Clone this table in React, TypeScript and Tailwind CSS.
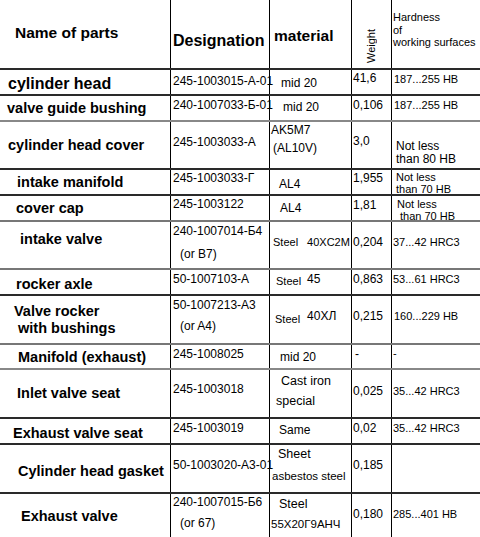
import React from "react";

const C1 = "w-[171px] shrink-0 border-r border-black relative";
const C2 = "w-[99px] shrink-0 border-r border-black relative";
const C3 = "w-[82px] shrink-0 border-r border-black relative";
const C4 = "w-[40px] shrink-0 border-r border-black relative";
const C5 = "w-[88px] shrink-0 relative";

const N = "font-bold text-[14.5px] leading-[17px] whitespace-nowrap";
const D = "text-[12px] leading-[14px] whitespace-nowrap";
const M = "text-[12px] leading-[14px] whitespace-nowrap";
const S = "text-[11px] leading-[14px] whitespace-nowrap";
const Wt = "text-[12px] leading-[14px] whitespace-nowrap pl-[1px]";
const H = "text-[11px] leading-[13px] whitespace-nowrap";

export default function App() {
  return (
    <div className="w-[480px] h-[537px] bg-white text-black overflow-hidden font-['Liberation_Sans',Arial,sans-serif]">
      {/* header */}
      <div className="flex h-[70px] border-b-2 border-[#2a2a2a]">
        <div className={C1}>
          <div className="font-bold text-[15.5px] leading-[18px] pl-[15px] pt-[24px] whitespace-nowrap">Name of parts</div>
        </div>
        <div className={C2}>
          <div className="font-bold text-[16px] leading-[18px] pl-[2px] pt-[32px] whitespace-nowrap">Designation</div>
        </div>
        <div className={C3}>
          <div className="font-bold text-[15.5px] leading-[18px] pl-[4px] pt-[27px] whitespace-nowrap">material</div>
        </div>
        <div className={`${C4} flex flex-col justify-end items-center pb-[5px] pr-[1px]`}>
          <div className="text-[11px] leading-[11px] [writing-mode:vertical-rl] rotate-180 whitespace-nowrap">Weight</div>
        </div>
        <div className={`${C5} overflow-hidden`}>
          <div className="text-[11px] leading-[12.5px] pl-[1px] pt-[11px] whitespace-nowrap">
            <div>Hardness</div>
            <div>of</div>
            <div>working surfaces</div>
          </div>
        </div>
      </div>

      {/* cylinder head */}
      <div className="flex h-[26px] border-b-2 border-[#2a2a2a]">
        <div className={C1}>
          <div className="font-bold text-[16px] leading-[18px] pl-[8px] pt-[5px] whitespace-nowrap">cylinder head</div>
        </div>
        <div className={C2}><div className={`${D} pl-[2px] pt-[4px]`}>245-1003015-A-01</div></div>
        <div className={C3}><div className={`${M} pl-[11px] pt-[6px]`}>mid 20</div></div>
        <div className={C4}><div className={`${Wt} pt-[1px]`}>41,6</div></div>
        <div className={C5}><div className={`${H} pl-[2px] pt-[3px]`}>187...255 HB</div></div>
      </div>

      {/* valve guide bushing */}
      <div className="flex h-[26px] border-b-2 border-[#888]">
        <div className={C1}><div className={`${N} pl-[7px] pt-[4px]`}>valve guide bushing</div></div>
        <div className={C2}><div className={`${D} pl-[2px] pt-[2px]`}>240-1007033-Б-01</div></div>
        <div className={C3}><div className={`${M} pl-[13px] pt-[4px]`}>mid 20</div></div>
        <div className={C4}><div className={`${Wt} pt-[2px]`}>0,106</div></div>
        <div className={C5}><div className={`${H} pl-[2px] pt-[2.5px]`}>187...255 HB</div></div>
      </div>

      {/* cylinder head cover */}
      <div className="flex h-[48px] border-b-2 border-[#2a2a2a]">
        <div className={C1}><div className={`${N} pl-[8px] pt-[14.5px]`}>cylinder head cover</div></div>
        <div className={C2}><div className={`${D} pl-[2px] pt-[13px]`}>245-1003033-A</div></div>
        <div className={C3}>
          <div className={`${M} pl-[1px] pt-[1px]`}>AK5M7</div>
          <div className={`${M} pl-[3px] mt-[4px]`}>(AL10V)</div>
        </div>
        <div className={C4}><div className={`${Wt} pt-[12px]`}>3,0</div></div>
        <div className={C5}>
          <div className="text-[12px] leading-[13px] whitespace-nowrap pl-[4px] pt-[17.5px]">
            <div>Not less</div>
            <div>than 80 HB</div>
          </div>
        </div>
      </div>

      {/* intake manifold */}
      <div className="flex h-[26px] border-b-2 border-[#2a2a2a]">
        <div className={C1}><div className={`${N} pl-[17px] pt-[3.5px]`}>intake manifold</div></div>
        <div className={C2}><div className={`${D} pl-[2px] pt-[1px]`}>245-1003033-Г</div></div>
        <div className={C3}><div className={`${M} pl-[9px] pt-[7px]`}>AL4</div></div>
        <div className={C4}><div className={`${Wt} pt-[1px]`}>1,955</div></div>
        <div className={C5}>
          <div className="text-[11px] leading-[12px] whitespace-nowrap pl-[4px] pt-[1px]">
            <div>Not less</div>
            <div>than 70 HB</div>
          </div>
        </div>
      </div>

      {/* cover cap */}
      <div className="flex h-[26px] border-b-2 border-[#777]">
        <div className={C1}><div className={`${N} pl-[16px] pt-[3.5px]`}>cover cap</div></div>
        <div className={C2}><div className={`${D} pl-[2px] pt-[1px]`}>245-1003122</div></div>
        <div className={C3}><div className={`${M} pl-[10px] pt-[5px]`}>AL4</div></div>
        <div className={C4}><div className={`${Wt} pt-[2px]`}>1,81</div></div>
        <div className={C5}>
          <div className="text-[11px] leading-[12px] whitespace-nowrap pt-[2px]">
            <div className="pl-[5px]">Not less</div>
            <div className="pl-[8px]">than 70 HB</div>
          </div>
        </div>
      </div>

      {/* intake valve */}
      <div className="flex h-[48px] border-b-2 border-[#777]">
        <div className={C1}><div className={`${N} pl-[20px] pt-[8.5px]`}>intake valve</div></div>
        <div className={C2}>
          <div className={`${D} pl-[2px] pt-[2px]`}>240-1007014-Б4</div>
          <div className={`${D} pl-[9px] mt-[9px]`}>(or B7)</div>
        </div>
        <div className={C3}>
          <div className="flex items-baseline pl-[3px] pt-[13px] whitespace-nowrap">
            <span className={S}>Steel</span>
            <span className={`${S} ml-[9px]`}>40XC2M</span>
          </div>
        </div>
        <div className={C4}><div className={`${Wt} pt-[13px]`}>0,204</div></div>
        <div className={C5}><div className={`${H} pl-[1px] pt-[13.5px]`}>37...42 HRC3</div></div>
      </div>

      {/* rocker axle */}
      <div className="flex h-[26px] border-b-2 border-[#2a2a2a]">
        <div className={C1}><div className={`${N} pl-[16px] pt-[5.5px]`}>rocker axle</div></div>
        <div className={C2}><div className={`${D} pl-[2px] pt-[2px]`}>50-1007103-A</div></div>
        <div className={C3}>
          <div className="flex items-start pl-[6px] pt-[2px] whitespace-nowrap">
            <span className={`${S} mt-[2px]`}>Steel</span>
            <span className={`${M} ml-[6px]`}>45</span>
          </div>
        </div>
        <div className={C4}><div className={`${Wt} pt-[2px]`}>0,863</div></div>
        <div className={C5}><div className={`${H} pl-[1px] pt-[2.5px]`}>53...61 HRC3</div></div>
      </div>

      {/* valve rocker */}
      <div className="flex h-[49px] border-b-2 border-[#777]">
        <div className={C1}>
          <div className={`${N} pl-[14px] pt-[6.5px]`}>Valve rocker</div>
          <div className={`${N} pl-[18px]`}>with bushings</div>
        </div>
        <div className={C2}>
          <div className={`${D} pl-[2px] pt-[2px]`}>50-1007213-A3</div>
          <div className={`${D} pl-[9px] mt-[7px]`}>(or A4)</div>
        </div>
        <div className={C3}>
          <div className="flex items-start pl-[5px] pt-[13px] whitespace-nowrap">
            <span className={`${S} mt-[3px]`}>Steel</span>
            <span className={`${M} ml-[7px]`}>40ХЛ</span>
          </div>
        </div>
        <div className={C4}><div className={`${Wt} pt-[13px]`}>0,215</div></div>
        <div className={C5}><div className={`${H} pl-[2px] pt-[13.5px]`}>160...229 HB</div></div>
      </div>

      {/* manifold exhaust */}
      <div className="flex h-[25px] border-b-2 border-[#888]">
        <div className={C1}><div className={`${N} pl-[18px] pt-[3.5px]`}>Manifold (exhaust)</div></div>
        <div className={C2}><div className={`${D} pl-[2px] pt-[2px]`}>245-1008025</div></div>
        <div className={C3}><div className={`${M} pl-[10px] pt-[5px]`}>mid 20</div></div>
        <div className={C4}><div className={`${Wt} pl-[3px] pt-[2px]`}>-</div></div>
        <div className={C5}><div className={`${H} pl-[1px] pt-[2px]`}>-</div></div>
      </div>

      {/* inlet valve seat */}
      <div className="flex h-[49px] border-b-2 border-[#2a2a2a]">
        <div className={C1}><div className={`${N} pl-[17px] pt-[14.5px]`}>Inlet valve seat</div></div>
        <div className={C2}><div className={`${D} pl-[2px] pt-[12px]`}>245-1003018</div></div>
        <div className={C3}>
          <div className="text-[12.5px] leading-[14px] whitespace-nowrap pl-[11px] pt-[4px]">Cast iron</div>
          <div className="text-[12.5px] leading-[14px] whitespace-nowrap pl-[6px] mt-[6px]">special</div>
        </div>
        <div className={C4}><div className={`${Wt} pt-[14px]`}>0,025</div></div>
        <div className={C5}><div className={`${H} pl-[1px] pt-[14.5px]`}>35...42 HRC3</div></div>
      </div>

      {/* exhaust valve seat */}
      <div className="flex h-[26px] border-b-2 border-[#2a2a2a]">
        <div className={C1}><div className={`${N} pl-[13px] pt-[5.5px]`}>Exhaust valve seat</div></div>
        <div className={C2}><div className={`${D} pl-[2px] pt-[2px]`}>245-1003019</div></div>
        <div className={C3}><div className={`${M} pl-[9px] pt-[4px]`}>Same</div></div>
        <div className={C4}><div className={`${Wt} pt-[2px]`}>0,02</div></div>
        <div className={C5}><div className={`${H} pl-[1px] pt-[2.5px]`}>35...42 HRC3</div></div>
      </div>

      {/* cylinder head gasket */}
      <div className="flex h-[49px] border-b-2 border-[#2a2a2a]">
        <div className={C1}><div className={`${N} pl-[18px] pt-[17.5px]`}>Cylinder head gasket</div></div>
        <div className={C2}><div className={`${D} pl-[2px] pt-[13px]`}>50-1003020-A3-01</div></div>
        <div className={C3}>
          <div className="text-[12.5px] leading-[14px] whitespace-nowrap pl-[8px] pt-[2px]">Sheet</div>
          <div className="text-[11.5px] leading-[14px] whitespace-nowrap pl-[2px] mt-[8px]">asbestos steel</div>
        </div>
        <div className={C4}><div className={`${Wt} pt-[13px]`}>0,185</div></div>
        <div className={C5}></div>
      </div>

      {/* exhaust valve */}
      <div className="flex h-[43px]">
        <div className={C1}><div className={`${N} pl-[21px] pt-[13.5px]`}>Exhaust valve</div></div>
        <div className={C2}>
          <div className={`${D} pl-[2px] pt-[1px]`}>240-1007015-Б6</div>
          <div className={`${D} pl-[9px] mt-[7px]`}>(or 67)</div>
        </div>
        <div className={C3}>
          <div className="text-[12.5px] leading-[14px] whitespace-nowrap pl-[9px] pt-[3px]">Steel</div>
          <div className="text-[11.5px] leading-[14px] whitespace-nowrap pl-[1px] mt-[6px]">55X20Г9AHЧ</div>
        </div>
        <div className={C4}><div className={`${Wt} pt-[13px]`}>0,180</div></div>
        <div className={C5}><div className={`${H} pl-[1px] pt-[13.5px]`}>285...401 HB</div></div>
      </div>
    </div>
  );
}
